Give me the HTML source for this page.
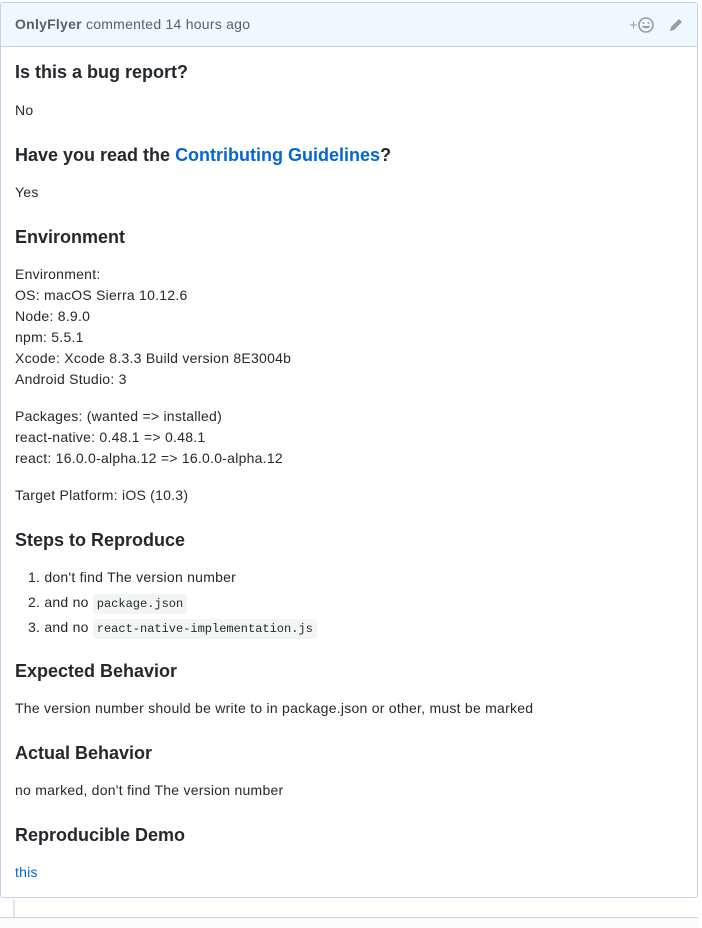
<!DOCTYPE html>
<html><head><style>
body{margin:0;width:702px;height:920px;background:#fff;font-family:"Liberation Sans",sans-serif;color:#24292e;position:relative;overflow:hidden}
.box{position:absolute;left:0;top:2px;width:696px;height:894px;border:1px solid #c0d3eb;border-radius:3px}
.hdr{position:absolute;left:0;top:0;right:0;height:43px;background:#f1f8ff;border-bottom:1px solid #c0d3eb}
.t{position:absolute;left:14px;white-space:nowrap;font-size:14px;line-height:21px;letter-spacing:0.25px}
h3{position:absolute;left:14px;margin:0;font-size:18px;line-height:24px;font-weight:bold;white-space:nowrap}
a{color:#0366d6;text-decoration:none}
code{font-family:"Liberation Mono",monospace;font-size:12px;letter-spacing:0;background:#f3f4f4;padding:3px 4px;border-radius:3px}
</style></head><body>
<div class="box">
<div class="hdr">
<div class="t" style="top:11px;color:#586069"><b style="color:#586069">OnlyFlyer</b> commented 14 hours ago</div>
<svg style="position:absolute;left:626px;top:12px" width="60" height="20" viewBox="0 0 60 20">
<path d="M3 10h7M6.5 6.5v7" stroke="#959da5" stroke-width="1"/>
<circle cx="19" cy="10" r="7" fill="none" stroke="#959da5" stroke-width="1.6"/>
<circle cx="16.5" cy="8" r="1" fill="#959da5"/><circle cx="21.5" cy="8" r="1" fill="#959da5"/>
<path d="M15 11h8c0 3-8 3-8 0z" fill="#959da5"/>
<path d="M43 16l1-4 8-8 3 3-8 8z" fill="#959da5"/>
</svg>
</div>
<h3 style="top:57px">Is this a bug report?</h3>
<div class="t" style="top:97px">No</div>
<h3 style="top:140px">Have you read the <a href="#">Contributing Guidelines</a>?</h3>
<div class="t" style="top:179px">Yes</div>
<h3 style="top:222px">Environment</h3>
<div class="t" style="top:261px">Environment:<br>OS: macOS Sierra 10.12.6<br>Node: 8.9.0<br>npm: 5.5.1<br>Xcode: Xcode 8.3.3 Build version 8E3004b<br>Android Studio: 3</div>
<div class="t" style="top:403px">Packages: (wanted =&gt; installed)<br>react-native: 0.48.1 =&gt; 0.48.1<br>react: 16.0.0-alpha.12 =&gt; 16.0.0-alpha.12</div>
<div class="t" style="top:482px">Target Platform: iOS (10.3)</div>
<h3 style="top:525px">Steps to Reproduce</h3>
<div class="t" style="top:564px;left:27px">1. don't find The version number</div>
<div class="t" style="top:589px;left:27px">2. and no <code>package.json</code></div>
<div class="t" style="top:614px;left:27px">3. and no <code>react-native-implementation.js</code></div>
<h3 style="top:656px">Expected Behavior</h3>
<div class="t" style="top:695px">The version number should be write to in package.json or other, must be marked</div>
<h3 style="top:738px">Actual Behavior</h3>
<div class="t" style="top:777px">no marked, don't find The version number</div>
<h3 style="top:820px">Reproducible Demo</h3>
<div class="t" style="top:859px"><a href="#">this</a></div>
</div>
<div style="position:absolute;left:13px;top:900px;width:2px;height:17px;background:#e1e4e8"></div>
<div style="position:absolute;left:0;top:917px;width:698px;height:10px;border-top:1px solid #d1d5da;background:#fafbfc"></div>
</body></html>
